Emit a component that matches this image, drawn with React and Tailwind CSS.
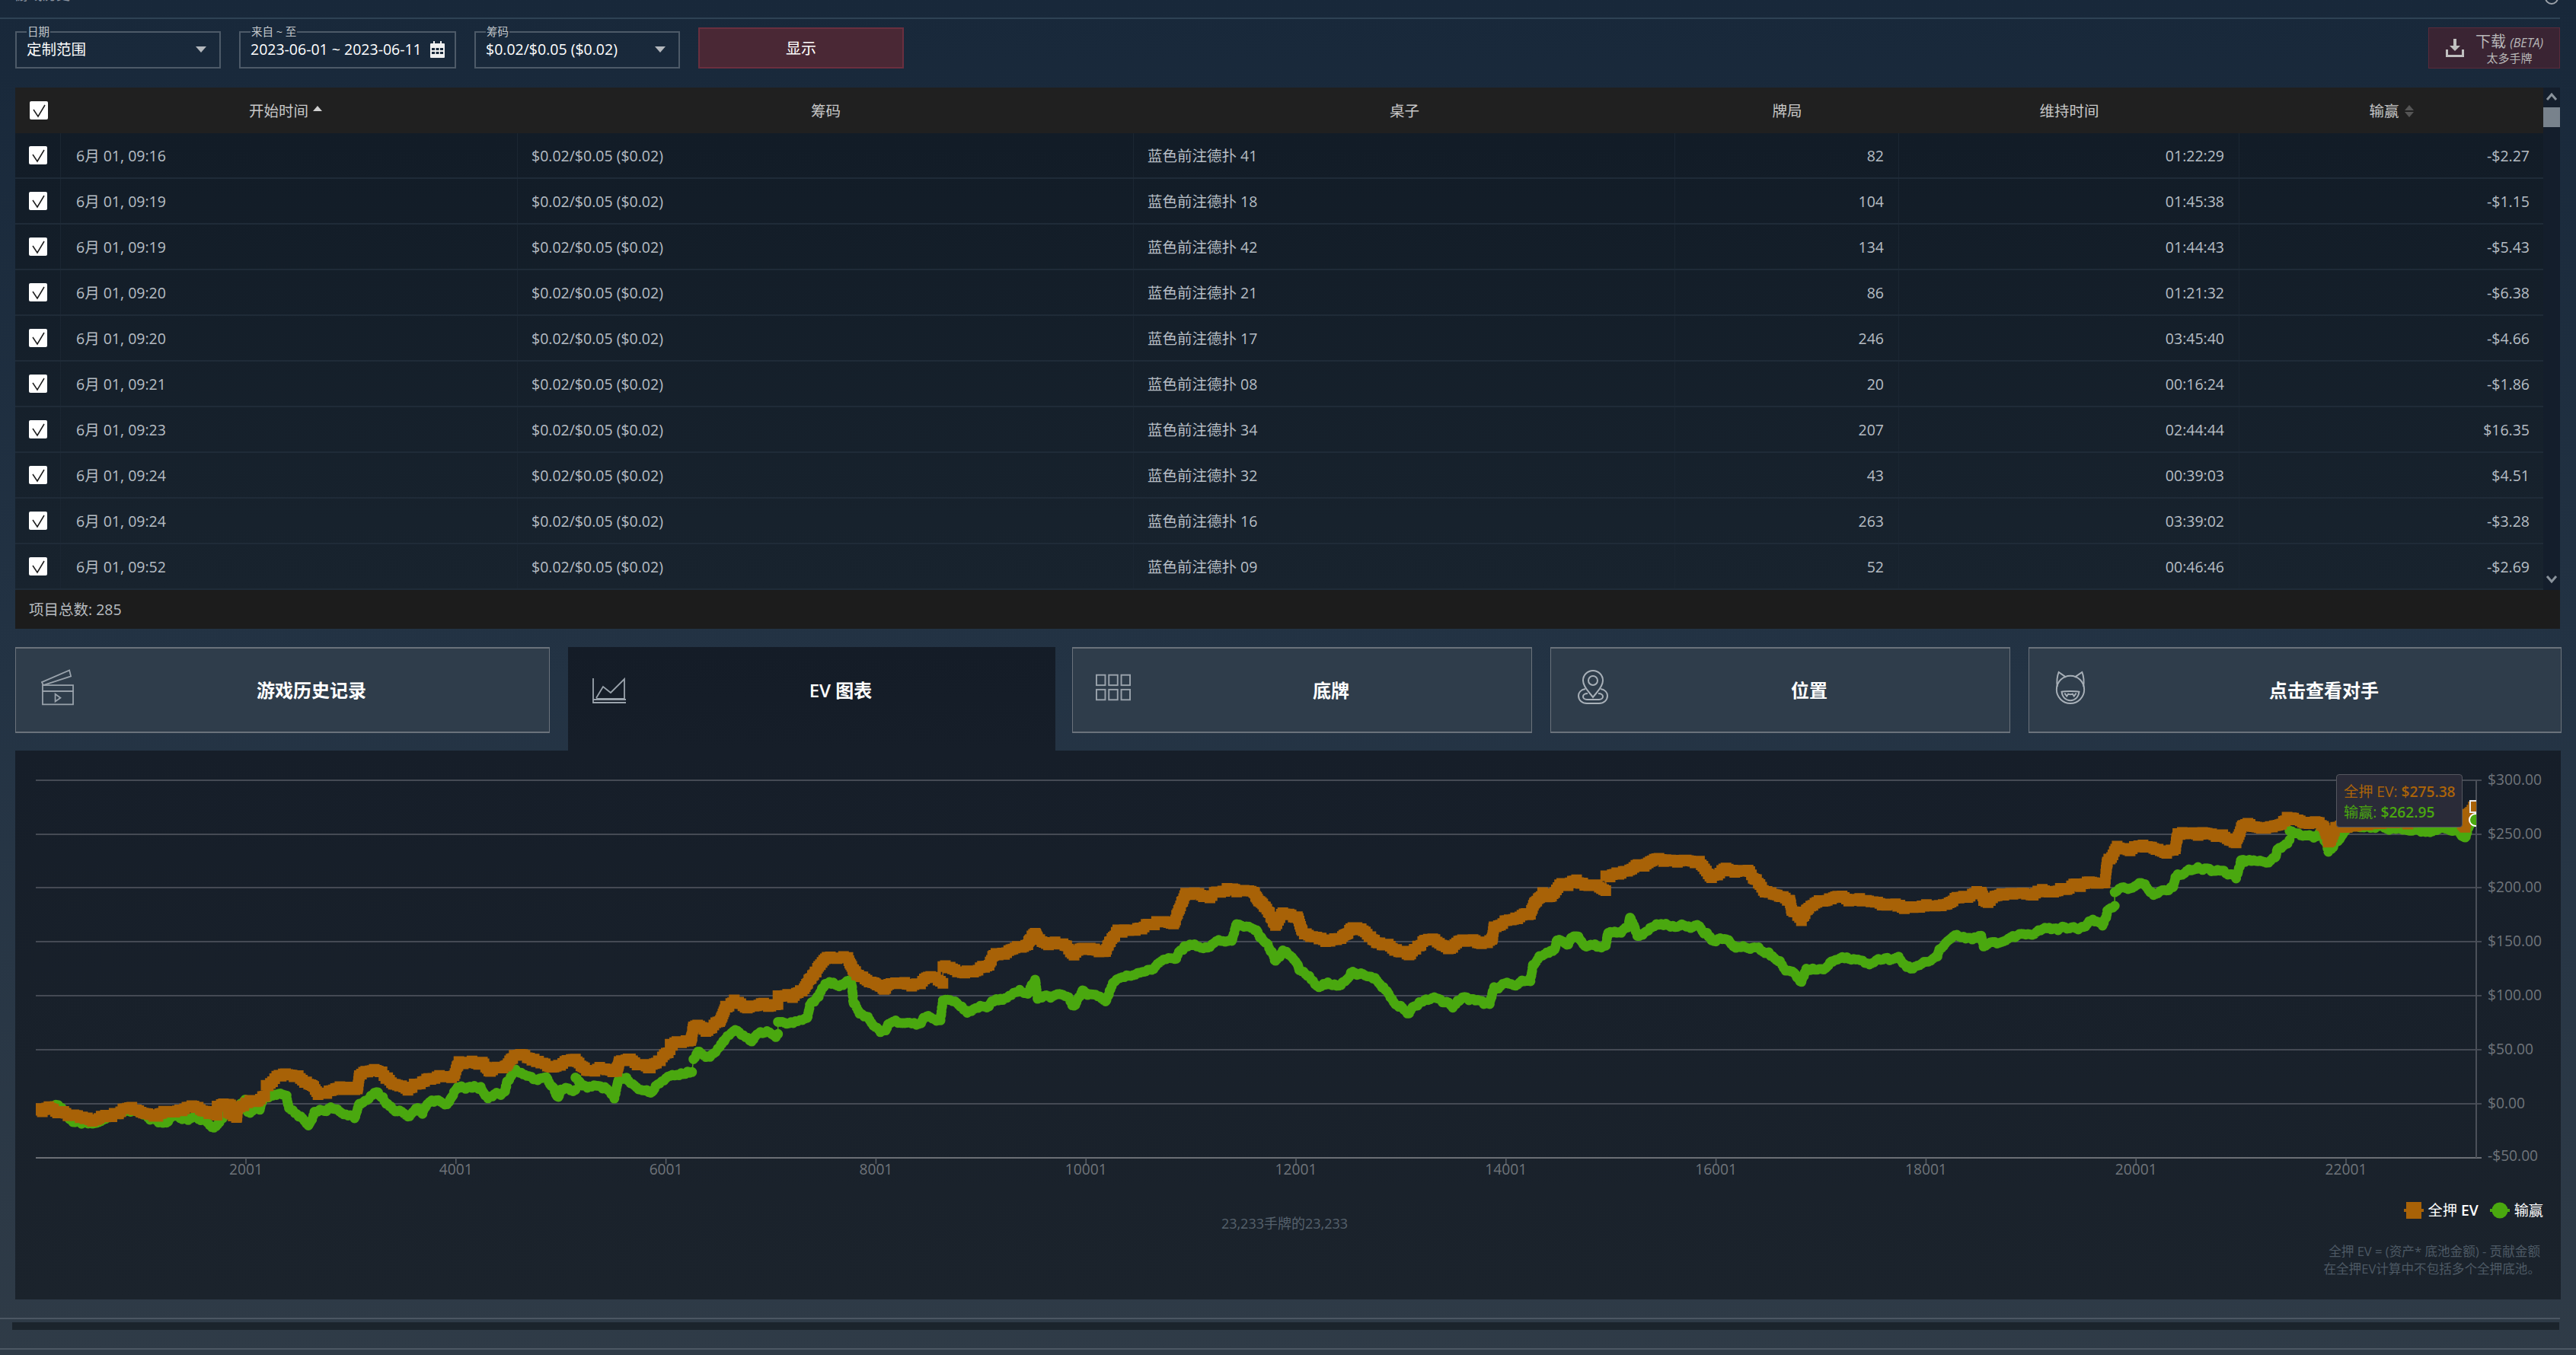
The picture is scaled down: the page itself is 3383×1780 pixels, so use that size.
import React from "react";

const FONT = { fontFamily: '"Open Sans","Noto Sans CJK SC",sans-serif' };

// key points are given in zoom-crop coordinates, converted to page coordinates
const z7 = (a) => a.map(([x, y]) => [x / 1.568, 1380 + y / 3]);
const z8 = (a) => a.map(([x, y]) => [x / 1.3067, 1000 + y / 3]);
const z9 = (a) => a.map(([x, y]) => [1200 + x / 1.568, 1000 + y / 3]);
const z10 = (a) => a.map(([x, y]) => [2200 + x / 1.568, 1000 + y / 3]);
const z5 = (a) => a.map(([x, y]) => [2900 + x / 3, 980 + y / 3]);

const ORANGE = [
  ...z7([[78,235],[110,235],[140,250],[160,270],[195,270],[235,240],[262,222],[300,245],[325,262],[345,240],[375,245],[395,232],[430,250],[447,255],[447,215],[460,200],[475,215],[470,245],[487,270],[490,235],[510,210],[545,180],[548,135],[570,110],[597,95],[640,130],[655,165],[700,135],[735,160],[740,110],[775,80],[810,125],[840,150],[870,115],[900,100],[935,95],[945,50],[990,45],[1010,80],[1040,65],[1062,20],[1100,40],[1150,65],[1185,45],[1215,85],[1245,75],[1270,95],[1275,40],[1335,60],[1360,30],[1380,0]]),
  ...z8([[1150,1115],[1185,1095],[1190,1040],[1215,1055],[1235,1030],[1245,975],[1260,950],[1290,965],[1335,960],[1335,930],[1360,935],[1380,900],[1390,865],[1405,815],[1425,770],[1455,765],[1465,810],[1470,835],[1495,860],[1515,910],[1525,885]]),
  ...z9([[10,890],[30,865],[60,875],[60,820],[85,815],[105,825],[155,800],[165,765],[200,750],[235,725],[240,695],[250,670],[255,710],[300,715],[330,755],[350,725],[395,745],[405,705],[420,670],[470,650],[500,625],[535,620],[560,525],[610,525],[645,495],[665,510],[700,505],[710,545],[730,600],[745,650],[760,610],[790,625],[800,680],[830,705],[880,705],[900,660],[930,675],[960,720],[1020,765],[1055,700],[1110,730],[1130,700],[1165,720],[1190,700],[1195,650],[1235,620],[1270,600],[1280,555],[1295,520],[1310,530],[1330,490],[1365,470],[1390,490],[1425,510],[1425,460],[1470,440],[1500,410],[1525,385]]),
  ...z10([[0,395],[50,405],[75,450],[100,430],[150,440],[185,505],[235,550],[240,590],[260,620],[275,575],[330,530],[380,555],[440,565],[490,585],[540,575],[580,525],[630,515],[635,545],[700,520],[770,500],[830,490],[885,455],[890,400],[910,350],[950,335],[990,360],[1030,340],[1035,285],[1100,280],[1155,310],[1170,250],[1230,255],[1260,215],[1305,235],[1335,255],[1345,310],[1360,265]]),
  ...z5([[620,300],[760,295],[900,300],[990,295],[1012,318],[1022,262],[1045,240]]),
];

const GREEN = [
  ...z7([[90,230],[120,225],[150,280],[195,290],[235,255],[260,240],[300,265],[340,290],[355,260],[375,275],[400,260],[445,295],[490,215],[505,180],[510,230],[535,230],[545,155],[565,170],[590,185],[595,230],[635,285],[650,240],[690,225],[730,260],[740,210],[775,170],[805,225],[840,250],[860,215],[870,240],[880,200],[925,200],[935,160],[950,140],[990,145],[1005,180],[1040,170],[1045,120],[1062,85],[1085,120],[1125,115],[1150,195],[1155,150],[1185,155],[1185,105],[1205,150],[1250,155],[1265,190],[1275,125],[1290,115],[1340,160],[1350,125],[1380,110],[1425,85],[1428,30],[1440,5]]),
  ...z8([[1215,1165],[1235,1130],[1245,1095],[1265,1065],[1290,1095],[1305,1060],[1335,1075],[1335,1020],[1365,1025],[1385,1010],[1390,970],[1405,925],[1420,865],[1440,885],[1460,860],[1465,960],[1480,1005],[1520,1070],[1525,1030]]),
  ...z9([[15,1045],[30,995],[55,1010],[60,945],[85,940],[110,985],[155,965],[170,935],[210,920],[235,905],[250,860],[255,925],[300,930],[330,970],[350,910],[395,950],[405,900],[420,850],[470,830],[510,790],[535,790],[560,725],[610,730],[655,700],[665,635],[700,640],[710,680],[740,760],[745,790],[760,750],[790,790],[795,830],[830,880],[880,875],[900,825],[950,865],[985,930],[1020,985],[1055,920],[1110,965],[1130,925],[1170,955],[1185,970],[1195,885],[1235,870],[1270,855],[1275,800],[1295,760],[1320,745],[1325,700],[1345,730],[1365,680],[1385,715],[1425,735],[1430,685],[1470,655],[1475,615],[1490,690],[1520,650]]),
  ...z10([[0,640],[50,650],[75,700],[110,685],[125,735],[150,730],[185,755],[235,825],[260,875],[270,825],[310,820],[330,775],[400,795],[460,785],[485,815],[540,785],[545,740],[580,700],[630,690],[635,725],[700,705],[770,660],[830,660],[860,620],[880,655],[890,590],[905,570],[905,515],[960,490],[985,525],[1025,490],[1030,440],[1100,420],[1155,460],[1165,385],[1200,400],[1235,380],[1240,335],[1265,310],[1265,270],[1315,305],[1330,270],[1345,350],[1375,290]]),
  ...z5([[570,325],[640,315],[830,340],[980,330],[1010,365],[1030,300],[1045,290]]),
];

function samples(keys, step, seed, amp) {
  let s = seed;
  const rnd = () => {
    s = (s * 16807) % 2147483647;
    return s / 2147483647 - 0.5;
  };
  const out = [];
  let wander = 0;
  for (let i = 0; i < keys.length - 1; i++) {
    const [x0, y0] = keys[i];
    const [x1, y1] = keys[i + 1];
    const dx = x1 - x0;
    const dy = y1 - y0;
    const len = Math.hypot(dx, dy);
    if (Math.abs(dx) < 3 && Math.abs(dy) > 12) {
      out.push([x0, y0]);
      continue;
    }
    const n = Math.max(1, Math.round(len / step));
    for (let k = 0; k < n; k++) {
      wander = wander * 0.8 + rnd() * amp;
      out.push([x0 + (dx * k) / n, y0 + (dy * k) / n + wander]);
    }
  }
  out.push(keys[keys.length - 1]);
  return out;
}

const orangePts = samples(ORANGE, 3, 12345, 5);
const greenPts = samples(GREEN, 3, 54321, 5);
const orangeMarks = orangePts.map(([x, y]) => `M${(x - 7).toFixed(1)} ${(y - 7).toFixed(1)}h14v14h-14z`).join("");
const greenMarks = greenPts.map(([x, y]) => `M${(x - 6.5).toFixed(1)} ${y.toFixed(1)}a6.5 6.5 0 1 0 13 0a6.5 6.5 0 1 0 -13 0z`).join("");
const orangeLine = orangePts.map(([x, y]) => `${x.toFixed(1)},${y.toFixed(1)}`).join(" ");
const greenLine = greenPts.map(([x, y]) => `${x.toFixed(1)},${y.toFixed(1)}`).join(" ");

const GRID = [1025, 1096, 1166, 1237, 1308, 1379, 1450];
const YLAB = ["$300.00", "$250.00", "$200.00", "$150.00", "$100.00", "$50.00", "$0.00"];
const XT = [2001, 4001, 6001, 8001, 10001, 12001, 14001, 16001, 18001, 20001, 22001];

function EVChart() {
  return (
    <svg viewBox="20 986 3343 721" className="block h-[721px] w-[3343px]" style={FONT}>
      <defs>
        <clipPath id="plot">
          <rect x="47" y="1000" width="3205" height="530" />
        </clipPath>
      </defs>
      {GRID.map((y) => (
        <line key={y} x1="47" x2="3259" y1={y} y2={y} stroke="#454a54" strokeWidth="2" />
      ))}
      <line x1="47" x2="3259" y1="1521" y2="1521" stroke="#6b6f75" strokeWidth="2" />
      <line x1="3252" x2="3252" y1="1025" y2="1521" stroke="#4b5059" strokeWidth="2" />
      {XT.map((n) => {
        const x = 323 + (n - 2001) * 0.1379;
        return (
          <g key={n}>
            <line x1={x} x2={x} y1="1521" y2="1529" stroke="#5a5f66" strokeWidth="1.5" />
            <text x={x} y="1543" textAnchor="middle" fontSize="19.2" fill="#6f747a">{n}</text>
          </g>
        );
      })}
      {YLAB.map((t, i) => (
        <text key={t} x="3267" y={GRID[i] + 6} fontSize="19.2" fill="#6f747a">{t}</text>
      ))}
      <text x="3267" y="1525" fontSize="19.2" fill="#6f747a">-$50.00</text>
      <g clipPath="url(#plot)">
        <polyline points={greenLine} fill="none" stroke="#4aa80f" strokeWidth="1.5" />
        <path d={greenMarks} fill="#4aa80f" />
        <polyline points={orangeLine} fill="none" stroke="#a86207" strokeWidth="1.5" />
        <path d={orangeMarks} fill="#a86207" />
        <rect x="3244" y="1052" width="15" height="15" fill="#a86207" stroke="#e8e8e8" strokeWidth="2" />
        <circle cx="3251" cy="1077" r="8" fill="#4aa80f" stroke="#ffffff" strokeWidth="2" />
      </g>
      <text x="1687" y="1614" textAnchor="middle" fontSize="18" fill="#56616c">23,233手牌的23,233</text>
    </svg>
  );
}

function Caret() {
  return <span className="h-0 w-0 border-x-[7px] border-x-transparent border-t-[8px] border-t-[#b4b8bd]" />;
}

function Field({ label, width, children }) {
  return (
    <fieldset className={`${width} -mt-[2px] h-[56px] min-w-0 border-2 border-[#4d5a68] px-[13px]`}>
      <legend className="px-[1px] text-[14.5px] leading-[16px] text-[#c4c8cc]">{label}</legend>
      {children}
    </fieldset>
  );
}

const ROWS = [
  ["09:16", "41", "82", "01:22:29", "-$2.27"],
  ["09:19", "18", "104", "01:45:38", "-$1.15"],
  ["09:19", "42", "134", "01:44:43", "-$5.43"],
  ["09:20", "21", "86", "01:21:32", "-$6.38"],
  ["09:20", "17", "246", "03:45:40", "-$4.66"],
  ["09:21", "08", "20", "00:16:24", "-$1.86"],
  ["09:23", "34", "207", "02:44:44", "$16.35"],
  ["09:24", "32", "43", "00:39:03", "$4.51"],
  ["09:24", "16", "263", "03:39:02", "-$3.28"],
  ["09:52", "09", "52", "00:46:46", "-$2.69"],
];

function Check() {
  return (
    <span className="flex h-[24px] w-[24px] items-center justify-center rounded-[2px] bg-white">
      <svg viewBox="0 0 24 24" className="h-[24px] w-[24px]" fill="none" stroke="#1c1c1c" strokeWidth="1.5">
        <path d="M5 11 L11 20 L20 5" />
      </svg>
    </span>
  );
}

const COLS = "grid grid-cols-[60px_600px_809px_711px_294px_447px_399px]";

function Table() {
  const hd = "flex items-center justify-center pt-[2px] text-[19.5px] text-[#c8c8c8]";
  const cell = "flex items-center border-r border-[#1b2632] pt-[2px] text-[19.5px] text-[#b6bdc4]";
  return (
    <div className="ml-[20px] mt-[25px] w-[3342px]">
      <div className="flex h-[660px]">
        <div className="w-[3320px] overflow-hidden">
          <div className={`${COLS} h-[60px] bg-[#202020]`}>
            <div className="flex items-center pl-[19px]"><Check /></div>
            <div className={`${hd} pr-[10px]`}>
              开始时间
              <span className="mb-[8px] ml-[6px] h-0 w-0 border-x-[6px] border-b-[7px] border-x-transparent border-b-[#d0d0d0]" />
            </div>
            <div className={hd}>筹码</div>
            <div className={hd}>桌子</div>
            <div className={hd}>牌局</div>
            <div className={hd}>维持时间</div>
            <div className={hd}>
              输赢
              <span className="ml-[7px] flex flex-col gap-[2px]">
                <span className="h-0 w-0 border-x-[6px] border-b-[7px] border-x-transparent border-b-[#555]" />
                <span className="h-0 w-0 border-x-[6px] border-t-[7px] border-x-transparent border-t-[#555]" />
              </span>
            </div>
          </div>
          <div className="bg-gradient-to-b from-[#121c27] to-[#18232e]">
            {ROWS.map((r, i) => (
              <div key={i} className={`${COLS} h-[60px] border-b-2 border-[#1f2b38]`}>
                <div className="flex items-center border-r border-[#1b2632] pl-[18px]"><Check /></div>
                <div className={`${cell} pl-[20px]`}>6月 01, {r[0]}</div>
                <div className={`${cell} pl-[18px]`}>$0.02/$0.05 ($0.02)</div>
                <div className={`${cell} pl-[18px]`}>蓝色前注德扑 {r[1]}</div>
                <div className={`${cell} justify-end pr-[19px]`}>{r[2]}</div>
                <div className={`${cell} justify-end pr-[19px]`}>{r[3]}</div>
                <div className={`${cell} justify-end border-r-0 pr-[18px]`}>{r[4]}</div>
              </div>
            ))}
          </div>
        </div>
        <div className="relative w-[22px] bg-[#141e2c]">
          <svg viewBox="0 0 22 12" className="absolute left-0 top-[6px] h-[12px] w-[22px]" fill="none" stroke="#8a939c" strokeWidth="3">
            <path d="M5 10 L11 3 L17 10" />
          </svg>
          <div className="absolute left-0 top-[26px] h-[26px] w-[22px] bg-[#78828c]" />
          <svg viewBox="0 0 22 12" className="absolute bottom-[8px] left-0 h-[12px] w-[22px]" fill="none" stroke="#8a939c" strokeWidth="3">
            <path d="M5 2 L11 9 L17 2" />
          </svg>
        </div>
      </div>
      <div className="flex h-[51px] items-center bg-[#1c1c1c] pl-[18px] pt-[1px] text-[19.5px] text-[#b8bcc0]">项目总数: 285</div>
    </div>
  );
}

const Stroke = "#9aa3ac";

function ClapIcon() {
  return (
    <svg viewBox="0 0 44 48" className="h-[48px] w-[44px]" fill="none" stroke={Stroke} strokeWidth="1.8">
      <path d="M1 17 L38 1 L40 9 L3 21 Z" />
      <path d="M2 21 H43 V29 H2 Z" />
      <path d="M2 29 H43 V47 H2 Z" />
      <path d="M19 33 L26 38 L19 43 Z" />
    </svg>
  );
}
function ChartIcon() {
  return (
    <svg viewBox="0 0 44 34" className="h-[34px] w-[44px]" fill="none" stroke={Stroke} strokeWidth="1.8">
      <path d="M1 1 V33 H44" />
      <path d="M5 27 L14 12 L24 20 L42 2 V28 H5" />
      <path d="M1 29 H44" />
    </svg>
  );
}
function GridIcon() {
  return (
    <svg viewBox="0 0 48 36" className="h-[36px] w-[48px]" fill="none" stroke={Stroke} strokeWidth="2">
      {[1, 18, 35].map((x) => (
        <g key={x}>
          <rect x={x} y="1" width="12" height="14" />
          <rect x={x} y="21" width="12" height="14" />
        </g>
      ))}
    </svg>
  );
}
function PinIcon() {
  return (
    <svg viewBox="0 0 42 46" className="h-[46px] w-[42px]" fill="none" stroke="#a8b0b8" strokeWidth="2">
      <path d="M21 36 C17 30 8 23 8 14 A13 13 0 0 1 34 14 C34 23 25 30 21 36 Z" />
      <circle cx="21" cy="14" r="6" />
      <path d="M11 25 C5 26 2 30 2 34 C2 40 7 44 13 44 H29 C35 44 40 40 40 34 C40 30 37 26 31 25" />
      <path d="M14 31 C10 31 8 33 8 35 C8 37 10 39 13 39 H29 C32 39 34 37 34 35 C34 33 32 31 28 31" />
    </svg>
  );
}
function CatIcon() {
  return (
    <svg viewBox="0 0 46 46" className="h-[46px] w-[46px]" fill="none" stroke="#a8b0b8" strokeWidth="2">
      <circle cx="23" cy="26" r="19" />
      <path d="M5 22 C4 14 5 7 7 2 L17 9" />
      <path d="M41 22 C42 14 41 7 39 2 L29 9" />
      <path d="M11 29 C15 28 31 28 35 29 C34 37 29 41 23 41 C17 41 12 37 11 29 Z" />
      <path d="M15 31 L18 35 L20 32 C22 33 24 33 26 32 L28 35 L31 31" />
    </svg>
  );
}

function Tab({ width, active, icon, pad, label, ml }) {
  return (
    <div
      className={`flex shrink-0 ${width} ${ml || ""} ${
        active
          ? "h-[136px] items-start bg-gradient-to-b from-[#141c27] to-[#161e29]"
          : "h-[113px] items-center border border-y-2 border-[#6a727b] bg-[#2f3d4b]"
      }`}
    >
      <div className={`flex w-[76px] shrink-0 justify-start ${active ? "h-[113px] items-center" : "-mt-[8px]"} ${pad}`}>{icon}</div>
      <div className={`flex flex-1 justify-center text-[24px] font-semibold text-white ${active ? "h-[113px] items-center" : ""}`}>{label}</div>
    </div>
  );
}

export default function App() {
  return (
    <div
      className="relative flex h-[1780px] w-[3383px] overflow-hidden bg-gradient-to-b from-[#18283a] via-[#233344] to-[#2f3b47]"
      style={FONT}
    >
      <div className="w-[3362px] shrink-0">
        <div className="flex h-[25px] items-start justify-between overflow-hidden border-b-2 border-[#2e4254] pl-[20px] pr-[2px]">
          <div className="-mt-[20px] text-[18px] text-[#8a93a0]">游戏历史</div>
          <div className="-mt-[12px] h-[18px] w-[18px] rounded-full border-2 border-[#9aa0a8]" />
        </div>
        <div className="mt-[11px] flex h-[54px] pl-[20px]">
          <Field label="日期" width="w-[270px]">
            <div className="-mt-[1px] flex h-[32px] items-center justify-between pr-[4px] text-[19.5px] text-white">
              定制范围 <Caret />
            </div>
          </Field>
          <Field label="来自 ~ 至" width="ml-[24px] w-[285px]">
            <div className="-mt-[1px] flex h-[32px] items-center justify-between text-[19.5px] text-white">
              <span className="whitespace-nowrap">2023-06-01 ~ 2023-06-11</span>
              <svg viewBox="0 0 19 22" className="h-[22px] w-[19px] shrink-0" fill="#f0f0f0">
                <path d="M4 0h2v4H4zM13 0h2v4h-2zM1 3h17a1 1 0 0 1 1 1v17a1 1 0 0 1-1 1H1a1 1 0 0 1-1-1V4a1 1 0 0 1 1-1z" />
                <path d="M2 9h4v3H2zM7.5 9h4v3h-4zM13 9h4v3h-4zM2 14h4v3H2zM7.5 14h4v3h-4zM13 14h4v3h-4z" fill="#18283a" />
              </svg>
            </div>
          </Field>
          <Field label="筹码" width="ml-[24px] w-[270px]">
            <div className="-mt-[1px] flex h-[32px] items-center justify-between pr-[4px] text-[19.5px] text-white">
              <span>$0.02/$0.05 ($0.02)</span> <Caret />
            </div>
          </Field>
          <div className="ml-[24px] flex h-[54px] w-[270px] items-center justify-center border-2 border-[#6a2f3f] bg-[#4a2835] pt-[2px] text-[20px] text-white">显示</div>
          <div className="ml-auto flex h-[54px] w-[173px] items-center border border-[#5a2b3b] bg-[#3a2433] pl-[22px]">
            <svg viewBox="0 0 24 24" className="h-[24px] w-[24px] shrink-0" fill="#c0c0c0">
              <path d="M10 0h4v9h5l-7 7-7-7h5z" />
              <path d="M0 14h3v7h18v-7h3v10H0z" />
            </svg>
            <div className="ml-[15px] flex flex-col items-center pt-[2px] text-[#b8b8b8]">
              <span className="whitespace-nowrap text-[20px] leading-[22px]">下载 <i className="text-[16px]">(BETA)</i></span>
              <span className="whitespace-nowrap text-[15px] leading-[18px]">太多手牌</span>
            </div>
          </div>
        </div>
        <Table />
        <div className="mt-[24px] flex pl-[20px]">
          <Tab width="w-[702px]" icon={<ClapIcon />} pad="pl-[33px]" label="游戏历史记录" />
          <Tab width="w-[640px]" ml="ml-[24px]" active icon={<ChartIcon />} pad="pl-[32px]" label="EV 图表" />
          <Tab width="w-[604px]" ml="ml-[22px]" icon={<GridIcon />} pad="pl-[30px]" label="底牌" />
          <Tab width="w-[604px]" ml="ml-[24px]" icon={<PinIcon />} pad="pl-[34px]" label="位置" />
          <Tab width="w-[700px]" ml="ml-[24px]" icon={<CatIcon />} pad="pl-[32px]" label="点击查看对手" />
        </div>
        <div className="relative ml-[20px] h-[721px] w-[3343px] bg-gradient-to-b from-[#161e29] to-[#1b232c]">
          <EVChart />
          <div className="absolute left-[3048px] top-[31px] h-[70px] w-[166px] rounded-[4px] border border-[#55575f] bg-[#2a2b38] pl-[9px] pt-[8px] text-[19.2px] leading-[27px]">
            <div className="whitespace-nowrap text-[#ab6309]">全押 EV: <b className="font-semibold">$275.38</b></div>
            <div className="whitespace-nowrap text-[#4aa80f]">输赢: <b className="font-semibold">$262.95</b></div>
          </div>
          <div className="absolute right-[23px] top-[593px] flex items-center text-[19.2px] leading-none text-white">
            <svg viewBox="0 0 26 22" className="mr-[6px] h-[22px] w-[26px]">
              <rect x="3" y="0" width="20" height="22" fill="#a86207" />
              <rect x="0" y="9" width="26" height="4" fill="#a86207" />
            </svg>
            全押 <b className="ml-[5px] font-semibold">EV</b>
            <svg viewBox="0 0 26 22" className="ml-[15px] mr-[6px] h-[22px] w-[26px]">
              <circle cx="13" cy="11" r="10.5" fill="#4aa80f" />
              <rect x="0" y="9" width="26" height="4" fill="#4aa80f" />
            </svg>
            输赢
          </div>
          <div className="absolute right-[27px] top-[646px] text-right text-[16.6px] leading-[23px] text-[#4d5964]">
            <div>全押 EV = (资产* 底池金额) - 贡献金额</div>
            <div>在全押EV计算中不包括多个全押底池。</div>
          </div>
        </div>
        <div className="mt-[24px] border-t-2 border-[#4c5763] pl-[16px] pt-[4px]">
          <div className="h-[10px] w-[3345px] bg-[#1b242c]" />
        </div>
        <div className="mt-[24px] w-[3383px] border-t-2 border-[#4c5763]" />
      </div>
    </div>
  );
}
